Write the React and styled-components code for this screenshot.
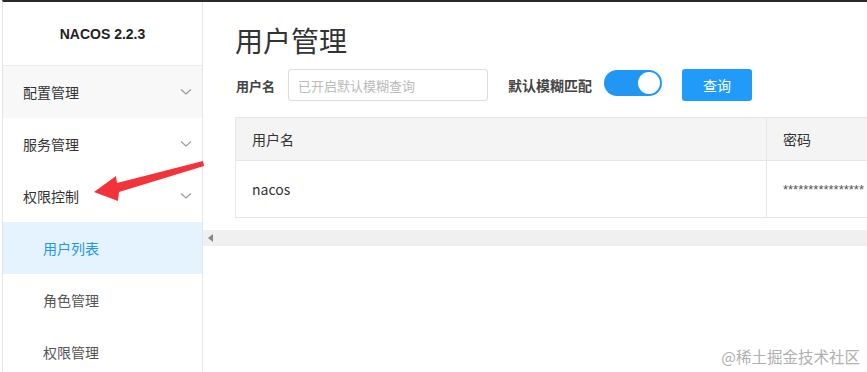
import React from 'react';
import styled, { createGlobalStyle } from 'styled-components';

const GlobalStyle = createGlobalStyle`
    html, body {
        margin: 0;
        padding: 0;
        background: #fff;
        font-family: "Noto Sans CJK SC", "Liberation Sans", sans-serif;
        color: #333;
    }
    * {
        box-sizing: border-box;
    }
`;

const Page = styled.div`
    position: relative;
    width: 867px;
    height: 372px;
    overflow: hidden;
    padding-left: 2px;
`;

const Frame = styled.div`
    display: flex;
    height: 100%;
    border-top: 2px solid #2a2a2a;
    border-left: 1px solid #e4e4e4;
`;

const Sidebar = styled.aside`
    width: 200px;
    flex-shrink: 0;
    border-right: 1px solid #e6e6e6;
    display: flex;
    flex-direction: column;
    overflow: hidden;
`;

const Brand = styled.div`
    height: 64px;
    flex-shrink: 0;
    display: flex;
    justify-content: center;
    align-items: center;
    border-bottom: 1px solid #ececec;
    font-family: "Liberation Sans", "Noto Sans", sans-serif;
    font-weight: bold;
    font-size: 14px;
    color: #222;
`;

const MenuItem = styled.div`
    height: 52px;
    flex-shrink: 0;
    display: flex;
    align-items: center;
    justify-content: space-between;
    padding: 0 10px 0 ${(p) => (p.$sub ? 40 : 20)}px;
    font-size: 14px;
    color: ${(p) => (p.$active ? '#2196f3' : p.$sub ? '#555' : '#333')};
    background: ${(p) => (p.$active ? '#e5f3ff' : p.$hover ? '#f8f8f8' : '#fff')};
`;

const Chevron = () => (
    <svg width="12" height="8" viewBox="0 0 12 8">
        <polyline points="1,1.5 6,6 11,1.5" fill="none" stroke="#999" strokeWidth="1.1" />
    </svg>
);

const Main = styled.main`
    flex: 1;
    min-width: 0;
    overflow: hidden;
    padding-top: 20px;
    display: flex;
    flex-direction: column;
`;

const Title = styled.h1`
    margin: 0 0 11px 32px;
    font-size: 28px;
    line-height: 36px;
    font-weight: normal;
    color: #333;
`;

const SearchBar = styled.div`
    display: flex;
    align-items: center;
    height: 32px;
    margin-left: 33px;
`;

const Label = styled.span`
    font-size: ${(p) => p.$size || 13}px;
    font-weight: bold;
    color: #444;
    margin-right: ${(p) => p.$gap}px;
    white-space: nowrap;
`;

const Input = styled.input`
    width: 200px;
    height: 32px;
    margin-right: 20px;
    border: 1px solid #dcdcdc;
    border-radius: 3px;
    padding: 0 9px;
    font-family: inherit;
    font-size: 13px;
    outline: none;
    &::placeholder {
        color: #bbb;
    }
`;

const Switch = styled.div`
    width: 58px;
    height: 26px;
    border-radius: 13px;
    background: #2196f3;
    padding: 2px;
    display: flex;
    justify-content: flex-end;
    margin-right: 20px;
    margin-top: -4px;
    &::after {
        content: '';
        width: 22px;
        height: 22px;
        border-radius: 50%;
        background: #fff;
    }
`;

const Button = styled.button`
    width: 70px;
    height: 32px;
    border: none;
    border-radius: 3px;
    background: #209bfa;
    color: #fff;
    font-family: inherit;
    font-size: 14px;
`;

const Table = styled.div`
    margin: 16px 0 0 32px;
    width: 800px;
    border: 1px solid #e6e6e6;
    border-right: none;
`;

const Row = styled.div`
    display: grid;
    grid-template-columns: 530px 1fr;
    height: ${(p) => (p.$head ? 43 : 56)}px;
    background: ${(p) => (p.$head ? '#f4f4f4' : '#fff')};
    border-bottom: ${(p) => (p.$head ? '1px solid #e6e6e6' : 'none')};
`;

const Cell = styled.div`
    display: flex;
    align-items: center;
    padding-left: 16px;
    font-size: 14px;
    color: #333;
    overflow: hidden;
    & + & {
        border-left: 1px solid #e6e6e6;
    }
`;

const Stars = styled.span`
    font-family: "Liberation Sans", sans-serif;
    font-size: 13px;
    color: #555;
    white-space: nowrap;
`;

const Scrollbar = styled.div`
    margin-top: 12px;
    height: 16px;
    background: #f0f0f0;
    display: flex;
    align-items: center;
    padding-left: 5px;
`;

const Arrow = styled.svg`
    position: absolute;
    left: 0;
    top: 0;
    pointer-events: none;
`;

const Watermark = styled.div`
    position: absolute;
    right: 7px;
    bottom: 5px;
    font-size: 15.5px;
    color: #b0b0b0;
`;

const menus = [
    { label: '配置管理', hover: true },
    { label: '服务管理' },
    { label: '权限控制' },
    { label: '用户列表', sub: true, active: true },
    { label: '角色管理', sub: true },
    { label: '权限管理', sub: true },
];

const App = () => {
    return (
        <Page>
            <GlobalStyle />
            <Frame>
                <Sidebar>
                    <Brand>NACOS 2.2.3</Brand>
                    {menus.map((m) => (
                        <MenuItem key={m.label} $sub={m.sub} $active={m.active} $hover={m.hover}>
                            <span>{m.label}</span>
                            {!m.sub && <Chevron />}
                        </MenuItem>
                    ))}
                </Sidebar>
                <Main>
                    <Title>用户管理</Title>
                    <SearchBar>
                        <Label $gap={13}>用户名</Label>
                        <Input placeholder="已开启默认模糊查询" />
                        <Label $gap={12} $size={14}>默认模糊匹配</Label>
                        <Switch />
                        <Button>查询</Button>
                    </SearchBar>
                    <Table>
                        <Row $head>
                            <Cell>用户名</Cell>
                            <Cell>密码</Cell>
                        </Row>
                        <Row>
                            <Cell>nacos</Cell>
                            <Cell>
                                <Stars>****************</Stars>
                            </Cell>
                        </Row>
                    </Table>
                    <Scrollbar>
                        <svg width="5" height="8" viewBox="0 0 5 8">
                            <polygon points="5,0 0,4 5,8" fill="#888" />
                        </svg>
                    </Scrollbar>
                </Main>
            </Frame>
            <Arrow width="867" height="372" viewBox="0 0 867 372">
                <polygon
                    points="94,192 116,176 117,183 203,161 204,166 119,192 118,201"
                    fill="#f2333a"
                />
            </Arrow>
            <Watermark>@稀土掘金技术社区</Watermark>
        </Page>
    );
};

export default App;
